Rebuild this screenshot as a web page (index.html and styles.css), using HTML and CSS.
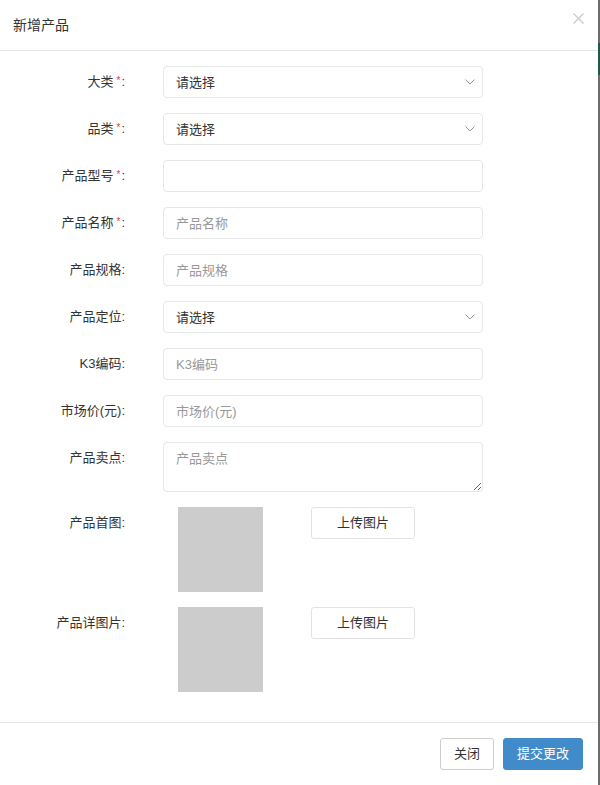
FILE: index.html
```html
<!DOCTYPE html>
<html lang="zh-CN">
<head>
  <meta charset="UTF-8">
  <meta name="viewport" content="width=device-width, initial-scale=1.0">
  <title>新增产品</title>
  <link rel="stylesheet" href="styles.css">
</head>
<body>
  <div class="page">
    <div class="modal">
      <div class="modal-header">
        <h4 class="modal-title">新增产品</h4>
        <button class="close" type="button">
          <svg width="11" height="11" viewBox="0 0 11 11"><path d="M0.5 0.5 L10.5 10.5 M10.5 0.5 L0.5 10.5" stroke="#c9c9c9" stroke-width="1.2" fill="none"/></svg>
        </button>
      </div>

      <form class="modal-body">
        <div class="form-row">
          <label class="form-label">大类<span class="req">*</span>:</label>
          <div class="form-field select-wrap">
            <select class="form-control"><option>请选择</option></select>
            <svg class="caret" width="10" height="6" viewBox="0 0 10 6"><path d="M0.5 0.5 L5 5 L9.5 0.5" stroke="#999" stroke-width="1" fill="none"/></svg>
          </div>
        </div>

        <div class="form-row">
          <label class="form-label">品类<span class="req">*</span>:</label>
          <div class="form-field select-wrap">
            <select class="form-control"><option>请选择</option></select>
            <svg class="caret" width="10" height="6" viewBox="0 0 10 6"><path d="M0.5 0.5 L5 5 L9.5 0.5" stroke="#999" stroke-width="1" fill="none"/></svg>
          </div>
        </div>

        <div class="form-row">
          <label class="form-label">产品型号<span class="req">*</span>:</label>
          <div class="form-field"><input class="form-control" type="text"></div>
        </div>

        <div class="form-row">
          <label class="form-label">产品名称<span class="req">*</span>:</label>
          <div class="form-field"><input class="form-control" type="text" placeholder="产品名称"></div>
        </div>

        <div class="form-row">
          <label class="form-label">产品规格:</label>
          <div class="form-field"><input class="form-control" type="text" placeholder="产品规格"></div>
        </div>

        <div class="form-row">
          <label class="form-label">产品定位:</label>
          <div class="form-field select-wrap">
            <select class="form-control"><option>请选择</option></select>
            <svg class="caret" width="10" height="6" viewBox="0 0 10 6"><path d="M0.5 0.5 L5 5 L9.5 0.5" stroke="#999" stroke-width="1" fill="none"/></svg>
          </div>
        </div>

        <div class="form-row">
          <label class="form-label">K3编码:</label>
          <div class="form-field"><input class="form-control" type="text" placeholder="K3编码"></div>
        </div>

        <div class="form-row">
          <label class="form-label">市场价(元):</label>
          <div class="form-field"><input class="form-control" type="text" placeholder="市场价(元)"></div>
        </div>

        <div class="form-row">
          <label class="form-label">产品卖点:</label>
          <div class="form-field"><textarea class="form-control textarea" placeholder="产品卖点"></textarea></div>
        </div>

        <div class="form-row">
          <label class="form-label">产品首图:</label>
          <div class="form-field upload">
            <div class="thumb"></div>
            <button class="btn btn-upload" type="button">上传图片</button>
          </div>
        </div>

        <div class="form-row">
          <label class="form-label">产品详图片:</label>
          <div class="form-field upload">
            <div class="thumb"></div>
            <button class="btn btn-upload" type="button">上传图片</button>
          </div>
        </div>
      </form>

      <div class="modal-footer">
        <button class="btn btn-default" type="button">关闭</button>
        <button class="btn btn-primary" type="button">提交更改</button>
      </div>
    </div>
    <div class="backdrop-edge"><div class="edge-green"></div></div>
  </div>
</body>
</html>
```

FILE: styles.css
```css
* {
  box-sizing: border-box;
}

body {
  margin: 0;
  font-family: "Liberation Sans", "Noto Sans CJK SC", sans-serif;
  font-size: 13px;
  line-height: 20px;
  color: #333;
  background: #fff;
}

.page {
  display: flex;
  min-height: 785px;
}

.modal {
  flex: 1;
  display: flex;
  flex-direction: column;
  background: #fff;
}

.backdrop-edge {
  width: 2px;
  background: #6c6c6c;
  padding-top: 43px;
}

.edge-green {
  height: 32px;
  background: #1d5a4b;
}

/* header */
.modal-header {
  display: flex;
  justify-content: space-between;
  align-items: flex-start;
  height: 51px;
  padding: 15px 14px 15px 13px;
  border-bottom: 1px solid #e5e5e5;
}

.modal-title {
  margin: 0;
  font-size: 14px;
  font-weight: normal;
  line-height: 20px;
}

.close {
  border: none;
  background: none;
  padding: 0;
  margin-top: -2px;
  line-height: 0;
  cursor: pointer;
}

/* body */
.modal-body {
  display: flex;
  flex-direction: column;
  gap: 15px;
  padding: 15px 0 30px;
  margin: 0;
}

.form-row {
  display: flex;
  align-items: flex-start;
  gap: 38px;
}

.form-label {
  width: 125px;
  flex-shrink: 0;
  text-align: right;
  padding-top: 6px;
  line-height: 20px;
}

.req {
  color: #e4393c;
  font-size: 10px;
  position: relative;
  top: -2px;
  margin: 0 1px 0 3px;
}

.form-field {
  width: 320px;
}

.form-control {
  display: block;
  width: 100%;
  height: 32px;
  padding: 5px 12px;
  font-family: inherit;
  font-size: 13px;
  color: #333;
  background: #fff;
  border: 1px solid #e5e6e7;
  border-radius: 4px;
  outline: none;
}

.form-control::placeholder {
  color: #999;
}

select.form-control {
  -webkit-appearance: none;
  appearance: none;
}

.select-wrap {
  position: relative;
}

.caret {
  position: absolute;
  right: 8px;
  top: 13px;
  pointer-events: none;
}

.textarea {
  height: 50px;
  resize: vertical;
  padding-top: 5px;
}

.upload {
  display: flex;
  align-items: flex-start;
  padding-left: 15px;
  gap: 48px;
}

.thumb {
  width: 85px;
  height: 85px;
  background: #ccc;
}

/* buttons */
.btn {
  font-family: inherit;
  font-size: 13px;
  line-height: 20px;
  height: 32px;
  padding: 5px 12px;
  border-radius: 3px;
  cursor: pointer;
}

.btn-upload {
  width: 104px;
  height: 32px;
  background: #fff;
  border: 1px solid #e3e3e3;
  color: #333;
}

.modal-footer {
  margin-top: auto;
  display: flex;
  justify-content: flex-end;
  gap: 9px;
  padding: 15px 15px 15px;
  border-top: 1px solid #e5e5e5;
}

.btn-default {
  width: 54px;
  background: #fff;
  border: 1px solid #ccc;
  color: #333;
}

.btn-primary {
  width: 80px;
  background: #428bca;
  border: 1px solid #428bca;
  color: #fff;
}
```
